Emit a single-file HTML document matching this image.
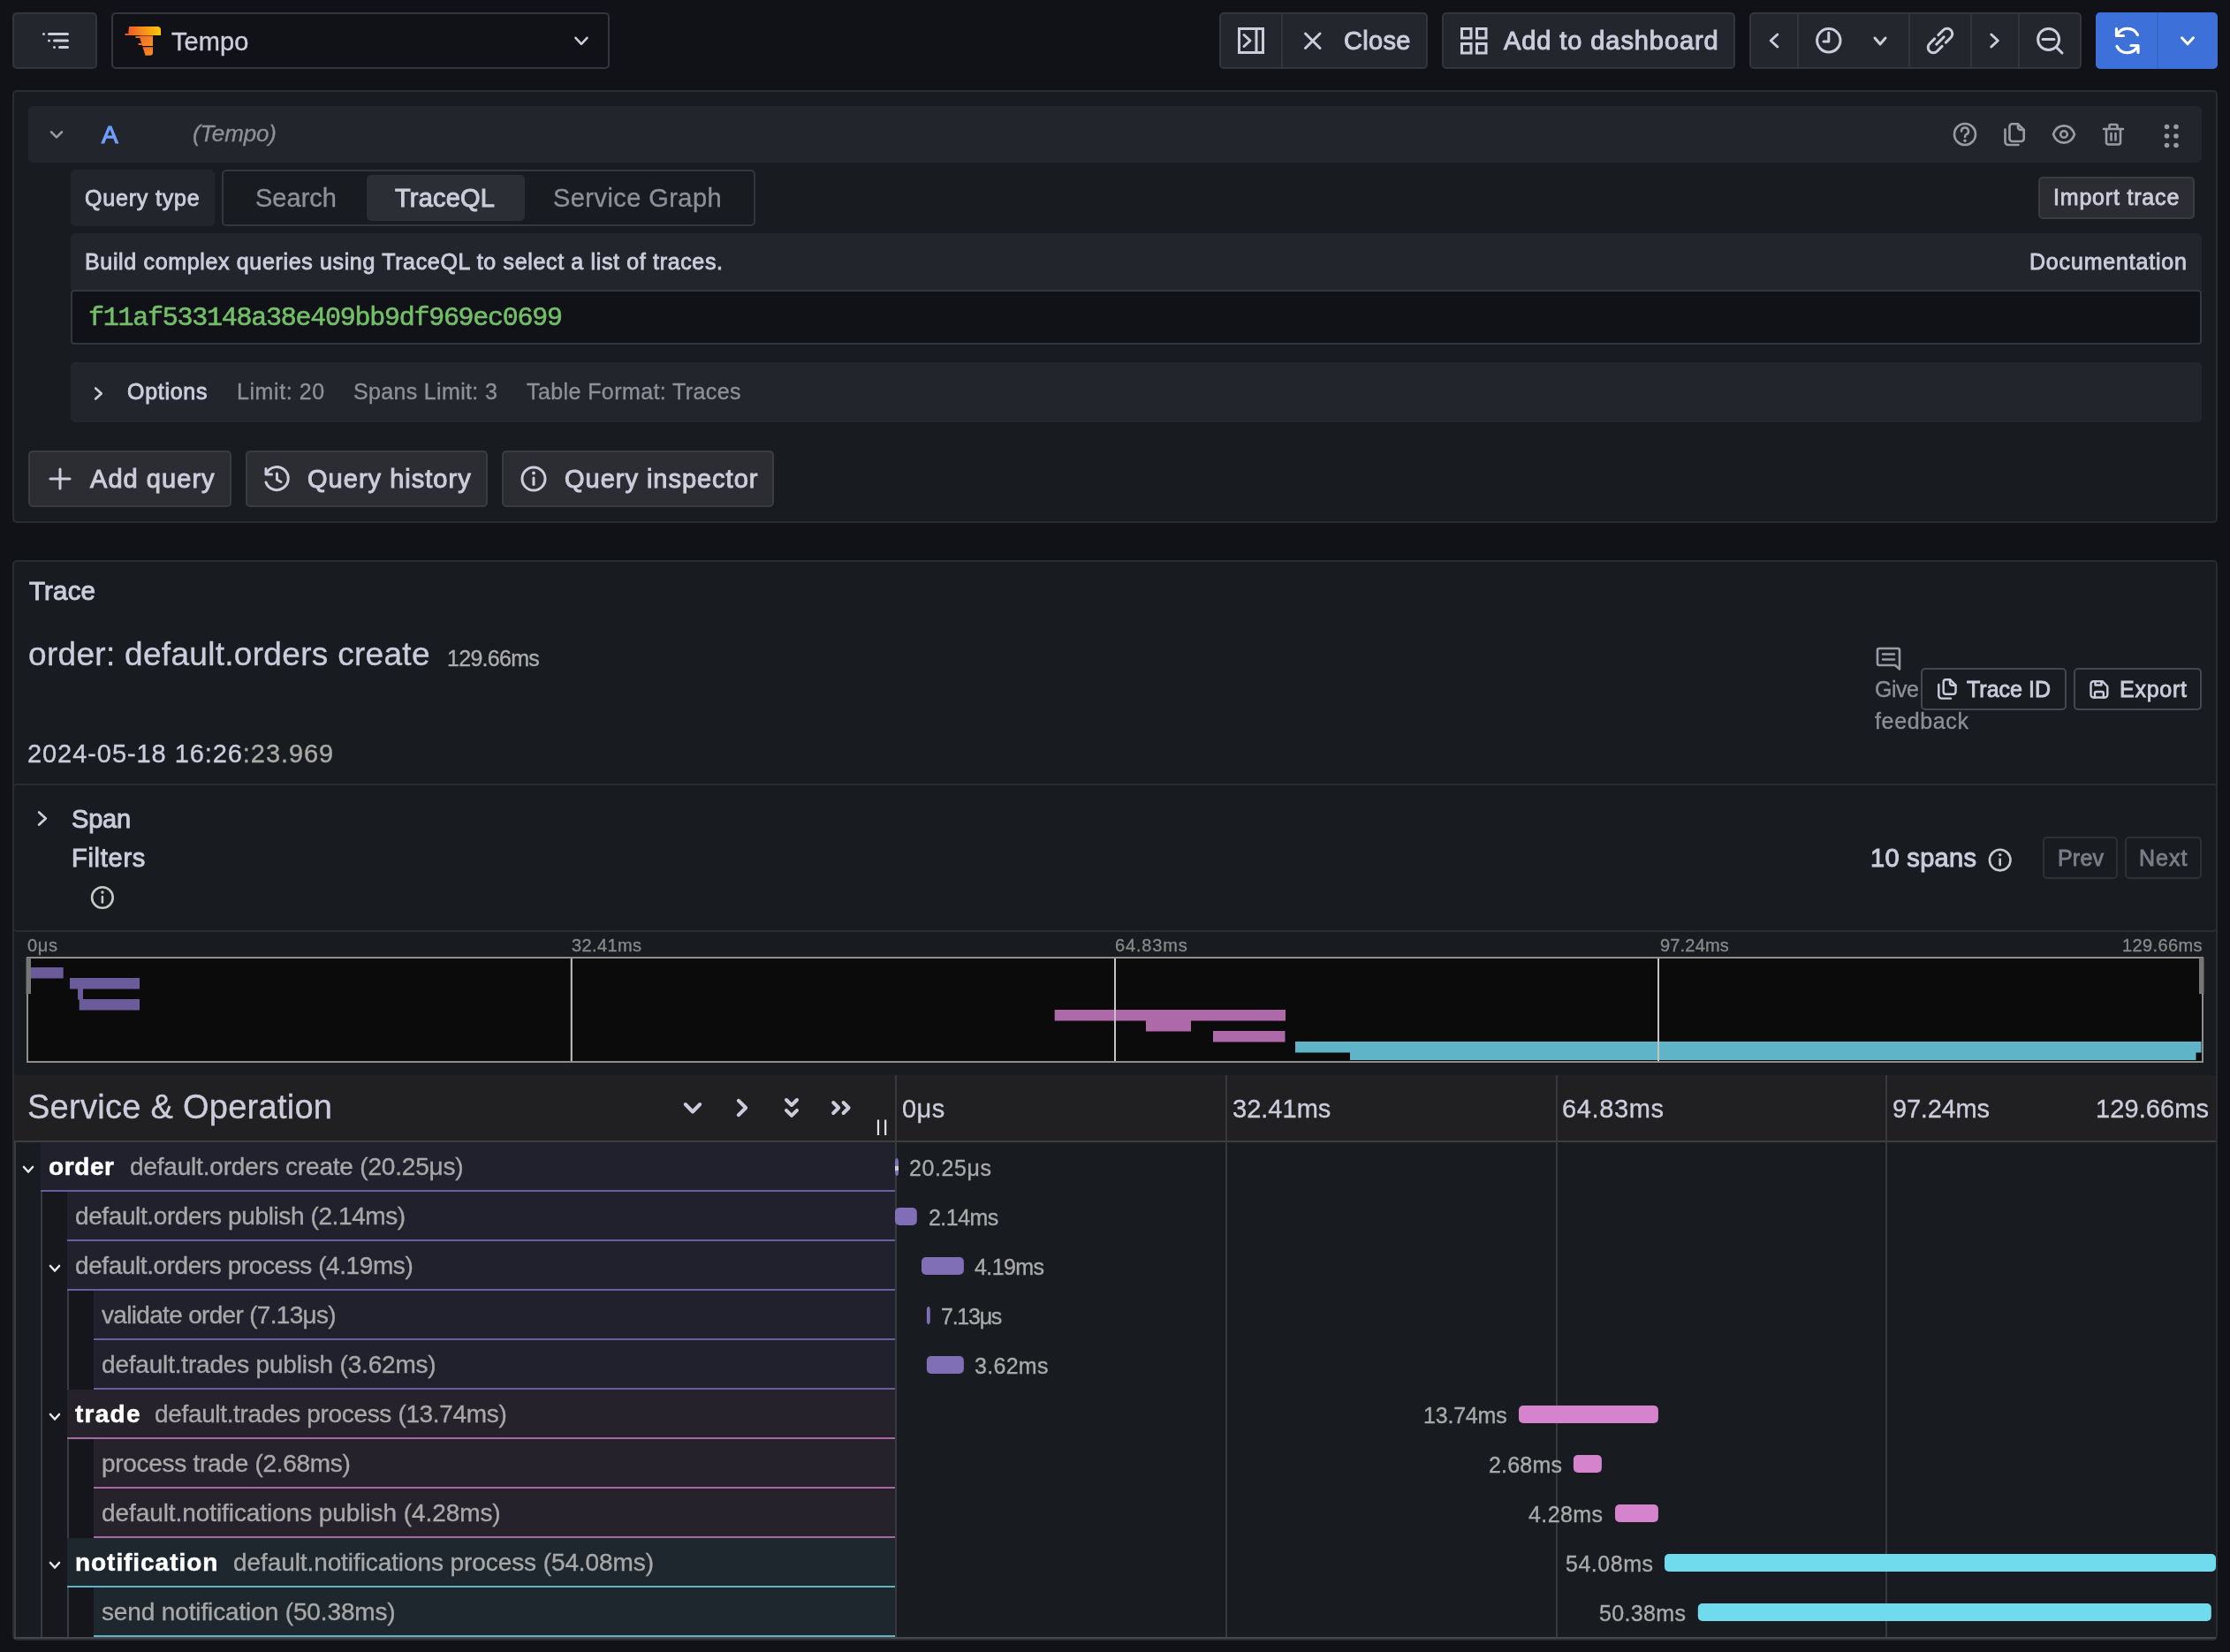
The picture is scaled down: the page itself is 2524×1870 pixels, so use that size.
<!DOCTYPE html>
<html><head><meta charset="utf-8"><title>Explore - Tempo</title><style>
html,body{margin:0;padding:0;}
body{width:2524px;height:1870px;background:#111217;overflow:hidden;position:relative;font-family:"Liberation Sans",sans-serif;}
.b{position:absolute;box-sizing:border-box;}
.t{position:absolute;white-space:pre;will-change:transform;}
svg{overflow:visible;}
</style></head><body>
<div class="b" style="left:14px;top:14px;width:96px;height:64px;background:#23262c;border:2px solid #33353b;border-radius:5px;"></div>
<svg class="b" style="left:0;top:0" width="2524" height="1870" viewBox="0 0 2524 1870"><rect x="48" y="37" width="3" height="3" rx="1.5" fill="#ccccdc"/><rect x="54" y="37" width="24" height="3" rx="1.5" fill="#ccccdc"/><rect x="54" y="44.6" width="3" height="3" rx="1.5" fill="#ccccdc"/><rect x="60" y="44.6" width="18" height="3" rx="1.5" fill="#ccccdc"/><rect x="60" y="52" width="3" height="3" rx="1.5" fill="#ccccdc"/><rect x="66" y="52" width="12" height="3" rx="1.5" fill="#ccccdc"/></svg>
<div class="b" style="left:126px;top:14px;width:564px;height:64px;background:#111217;border:2px solid #34363d;border-radius:5px;"></div>
<svg class="b" style="left:0;top:0" width="2524" height="1870" viewBox="0 0 2524 1870"><defs><linearGradient id="tg" x1="0" y1="0" x2="1" y2="0"><stop offset="0" stop-color="#f05a28"/><stop offset="1" stop-color="#fbca0a"/></linearGradient>
<linearGradient id="tg2" x1="0" y1="0" x2="1" y2="1"><stop offset="0" stop-color="#f2672a"/><stop offset="1" stop-color="#f7941d"/></linearGradient></defs>
<path d="M146 30 H178 Q182 30 182 34 V40 H145 Z" fill="url(#tg)"/>
<rect x="141.5" y="38" width="4" height="2" fill="#f05a28"/>
<path d="M157.5 40.5 H173 V52 H161 Z" fill="url(#tg2)"/>
<rect x="153.5" y="41" width="5" height="2" fill="#f2672a"/>
<rect x="156.5" y="49" width="5" height="2" fill="#f2672a"/>
<path d="M161.5 53.2 H173 V59.5 Q173 62.8 169.5 62.8 H164.5 Z" fill="url(#tg2)"/></svg>
<span class="t" style="top:33.35px;font-family:'Liberation Sans', sans-serif;font-size:29px;line-height:29px;color:#ccccdc;-webkit-text-stroke:0.35px #ccccdc;letter-spacing:0.113px;left:193.5px;">Tempo</span>
<svg class="b" style="left:0;top:0" width="2524" height="1870" viewBox="0 0 2524 1870"><polyline points="651.5,42.8 658.0,49.8 664.5,42.8" fill="none" stroke="#ccccdc" stroke-width="2.6" stroke-linecap="round" stroke-linejoin="round"/></svg>
<div class="b" style="left:1380px;top:14px;width:236px;height:64px;background:#23262c;border:2px solid #33353b;border-radius:5px;"></div>
<div class="b" style="left:1450px;top:16px;width:2px;height:60px;background:#33353b;"></div>
<svg class="b" style="left:0;top:0" width="2524" height="1870" viewBox="0 0 2524 1870"><rect x="1402.5" y="32.5" width="27" height="27" fill="none" stroke="#ccccdc" stroke-width="3"/><line x1="1422" y1="32" x2="1422" y2="60" stroke="#ccccdc" stroke-width="3"/><polyline points="1408.0,39.5 1415.0,46.0 1408.0,52.5" fill="none" stroke="#ccccdc" stroke-width="3" stroke-linecap="round" stroke-linejoin="round"/><path d="M1477.5 38 L1494 54.5 M1494 38 L1477.5 54.5" stroke="#ccccdc" stroke-width="3" stroke-linecap="round"/></svg>
<span class="t" style="top:32.15px;font-family:'Liberation Sans', sans-serif;font-size:29px;line-height:29px;color:#ccccdc;-webkit-text-stroke:1.00px #ccccdc;letter-spacing:0.336px;left:1520.7px;">Close</span>
<div class="b" style="left:1632px;top:14px;width:332px;height:64px;background:#23262c;border:2px solid #33353b;border-radius:5px;"></div>
<svg class="b" style="left:0;top:0" width="2524" height="1870" viewBox="0 0 2524 1870"><rect x="1654.5" y="32.5" width="10.5" height="10.5" fill="none" stroke="#ccccdc" stroke-width="3"/><rect x="1671.5" y="32.5" width="10.5" height="10.5" fill="none" stroke="#ccccdc" stroke-width="3"/><rect x="1654.5" y="49.5" width="10.5" height="10.5" fill="none" stroke="#ccccdc" stroke-width="3"/><rect x="1671.5" y="49.5" width="10.5" height="10.5" fill="none" stroke="#ccccdc" stroke-width="3"/></svg>
<span class="t" style="top:32.15px;font-family:'Liberation Sans', sans-serif;font-size:29px;line-height:29px;color:#ccccdc;-webkit-text-stroke:1.00px #ccccdc;letter-spacing:0.915px;left:1702px;">Add to dashboard</span>
<div class="b" style="left:1980px;top:14px;width:376px;height:64px;background:#23262c;border:2px solid #33353b;border-radius:5px;"></div>
<div class="b" style="left:2034px;top:16px;width:2px;height:60px;background:#33353b;"></div>
<div class="b" style="left:2160px;top:16px;width:2px;height:60px;background:#33353b;"></div>
<div class="b" style="left:2230px;top:16px;width:2px;height:60px;background:#33353b;"></div>
<div class="b" style="left:2284px;top:16px;width:2px;height:60px;background:#33353b;"></div>
<svg class="b" style="left:0;top:0" width="2524" height="1870" viewBox="0 0 2524 1870"><polyline points="2011.8,39.0 2004.2,46.0 2011.8,53.0" fill="none" stroke="#ccccdc" stroke-width="3" stroke-linecap="round" stroke-linejoin="round"/><circle cx="2069.8" cy="45.8" r="13.2" fill="none" stroke="#ccccdc" stroke-width="3"/><path d="M2069.8 37 V47 H2064" fill="none" stroke="#ccccdc" stroke-width="3" stroke-linecap="round" stroke-linejoin="round"/><polyline points="2122.0,43.0 2128.0,50.0 2134.0,43.0" fill="none" stroke="#ccccdc" stroke-width="3" stroke-linecap="round" stroke-linejoin="round"/><g fill="none" stroke="#ccccdc" stroke-width="3" stroke-linecap="round" transform="rotate(-45 2196 46)">
<path d="M2193 40 H2185 a6 6 0 0 0 0 12 H2193"/><path d="M2199 40 H2207 a6 6 0 0 1 0 12 H2199"/><path d="M2190 46 H2202"/></g><polyline points="2253.8,39.0 2261.3,46.0 2253.8,53.0" fill="none" stroke="#ccccdc" stroke-width="3" stroke-linecap="round" stroke-linejoin="round"/><circle cx="2318.6" cy="44.5" r="12" fill="none" stroke="#ccccdc" stroke-width="3"/><path d="M2312 44.5 H2325 M2327.5 53.5 L2334 60" fill="none" stroke="#ccccdc" stroke-width="3" stroke-linecap="round"/></svg>
<div class="b" style="left:2372px;top:14px;width:70px;height:64px;background:#3d71d9;border-radius:5px 0 0 5px;"></div>
<div class="b" style="left:2442px;top:14px;width:68px;height:64px;background:#3d71d9;border-radius:0 5px 5px 0;"></div>
<div class="b" style="left:2441px;top:14px;width:2px;height:64px;background:#3869c9;"></div>
<svg class="b" style="left:0;top:0" width="2524" height="1870" viewBox="0 0 2524 1870"><g fill="none" stroke="#fff" stroke-width="3.2" stroke-linecap="round" stroke-linejoin="round">
<path d="M2396 40 A13 13 0 0 1 2419.5 39.5"/><path d="M2419.5 52 A13 13 0 0 1 2396 52.5"/>
<path d="M2395.5 32.5 V40.5 H2403.5"/><path d="M2420 59.5 V51.5 H2412"/></g><polyline points="2469.5,42.8 2476.0,49.8 2482.5,42.8" fill="none" stroke="#fff" stroke-width="3" stroke-linecap="round" stroke-linejoin="round"/></svg>
<div class="b" style="left:14px;top:102px;width:2496px;height:490px;background:#181b1f;border:2px solid #2a2c32;border-radius:5px;"></div>
<div class="b" style="left:32px;top:120px;width:2460px;height:64px;background:#22252b;border-radius:5px;"></div>
<svg class="b" style="left:0;top:0" width="2524" height="1870" viewBox="0 0 2524 1870"><polyline points="58.0,149.3 64.0,155.3 70.0,149.3" fill="none" stroke="#9a9ba6" stroke-width="2.6" stroke-linecap="round" stroke-linejoin="round"/></svg>
<span class="t" style="top:138.50px;font-family:'Liberation Sans', sans-serif;font-size:28px;line-height:28px;color:#6e9fff;-webkit-text-stroke:1.2px #6e9fff;left:114.8px;">A</span>
<span class="t" style="top:138.20px;font-family:'Liberation Sans', sans-serif;font-size:26px;line-height:26px;color:#8e8f9a;-webkit-text-stroke:0.35px #8e8f9a;font-style:italic;letter-spacing:-0.143px;left:218px;">(Tempo)</span>
<svg class="b" style="left:0;top:0" width="2524" height="1870" viewBox="0 0 2524 1870"><g fill="none" stroke="#9a9ba6" stroke-width="2.6" stroke-linecap="round" stroke-linejoin="round"><circle cx="2224" cy="152" r="12"/><path d="M2220 148.5 a4 4 0 1 1 5.5 3.7 c-1.2 0.6 -1.5 1.3 -1.5 2.8"/></g><circle cx="2224" cy="159.3" r="1.7" fill="#9a9ba6"/><g fill="none" stroke="#9a9ba6" stroke-width="2.6" stroke-linecap="round" stroke-linejoin="round"><path d="M2277.5 140.3 H2284 L2290.7 147 V157 a3 3 0 0 1 -3 3 H2277.5 a3 3 0 0 1 -3 -3 V143.3 a3 3 0 0 1 3 -3 Z"/><path d="M2284 140.3 V144 a3 3 0 0 0 3 3 H2290.7"/><path d="M2269.5 146.5 V160.5 a3.5 3.5 0 0 0 3.5 3.5 H2284.5"/><path d="M2324 152 C2328.5 139.2 2343.5 139.2 2348 152 C2343.5 164.8 2328.5 164.8 2324 152 Z"/><circle cx="2336" cy="152" r="3.8"/><path d="M2381 146 H2403 M2387.5 146 V142.5 a1.5 1.5 0 0 1 1.5 -1.5 H2395 a1.5 1.5 0 0 1 1.5 1.5 V146 M2384 146 V161 a2.5 2.5 0 0 0 2.5 2.5 H2397.5 a2.5 2.5 0 0 0 2.5 -2.5 V146 M2389.5 151 V158.5 M2394.5 151 V158.5"/></g><circle cx="2452.5" cy="143.5" r="2.8" fill="#9a9ba6"/><circle cx="2452.5" cy="154" r="2.8" fill="#9a9ba6"/><circle cx="2452.5" cy="164.5" r="2.8" fill="#9a9ba6"/><circle cx="2463" cy="143.5" r="2.8" fill="#9a9ba6"/><circle cx="2463" cy="154" r="2.8" fill="#9a9ba6"/><circle cx="2463" cy="164.5" r="2.8" fill="#9a9ba6"/></svg>
<div class="b" style="left:80px;top:192px;width:163px;height:64px;background:#22252b;border-radius:5px;"></div>
<span class="t" style="top:212.25px;font-family:'Liberation Sans', sans-serif;font-size:25px;line-height:25px;color:#ccccdc;-webkit-text-stroke:0.86px #ccccdc;letter-spacing:0.813px;left:96px;">Query type</span>
<div class="b" style="left:251px;top:192px;width:604px;height:64px;background:#181b1f;border:2px solid #34363d;border-radius:5px;"></div>
<div class="b" style="left:415px;top:198px;width:179px;height:52px;background:#2c2e35;border-radius:5px;"></div>
<span class="t" style="top:210.35px;font-family:'Liberation Sans', sans-serif;font-size:29px;line-height:29px;color:#8e8f9a;-webkit-text-stroke:0.35px #8e8f9a;letter-spacing:0.022px;left:289px;">Search</span>
<span class="t" style="top:210.35px;font-family:'Liberation Sans', sans-serif;font-size:29px;line-height:29px;color:#ccccdc;-webkit-text-stroke:1.00px #ccccdc;letter-spacing:0.208px;left:447px;">TraceQL</span>
<span class="t" style="top:210.35px;font-family:'Liberation Sans', sans-serif;font-size:29px;line-height:29px;color:#8e8f9a;-webkit-text-stroke:0.35px #8e8f9a;letter-spacing:0.437px;left:626px;">Service Graph</span>
<div class="b" style="left:2307px;top:200px;width:177px;height:48px;background:#2b2d33;border:2px solid #3a3c42;border-radius:5px;"></div>
<span class="t" style="top:211.05px;font-family:'Liberation Sans', sans-serif;font-size:25px;line-height:25px;color:#ccccdc;-webkit-text-stroke:0.86px #ccccdc;letter-spacing:0.811px;left:2323.7px;">Import trace</span>
<div class="b" style="left:80px;top:264px;width:2412px;height:64px;background:#22252b;border-radius:5px 5px 0 0;"></div>
<span class="t" style="top:284.25px;font-family:'Liberation Sans', sans-serif;font-size:25px;line-height:25px;color:#ccccdc;-webkit-text-stroke:0.86px #ccccdc;letter-spacing:0.656px;left:96px;">Build complex queries using TraceQL to select a list of traces.</span>
<span class="t" style="top:283.75px;font-family:'Liberation Sans', sans-serif;font-size:25px;line-height:25px;color:#ccccdc;-webkit-text-stroke:0.86px #ccccdc;letter-spacing:0.82px;left:2297px;">Documentation</span>
<div class="b" style="left:80px;top:328px;width:2412px;height:62px;background:#111217;border:2px solid #34363d;border-radius:4px;"></div>
<span class="t" style="top:345.25px;font-family:'Liberation Mono', monospace;font-size:30px;line-height:30px;color:#73bf69;-webkit-text-stroke:0.6px #73bf69;letter-spacing:-1.258px;left:99.7px;">f11af533148a38e409bb9df969ec0699</span>
<div class="b" style="left:80px;top:410px;width:2412px;height:68px;background:#22252b;border-radius:5px;"></div>
<svg class="b" style="left:0;top:0" width="2524" height="1870" viewBox="0 0 2524 1870"><polyline points="108.2,439.5 114.8,445.5 108.2,451.5" fill="none" stroke="#ccccdc" stroke-width="2.6" stroke-linecap="round" stroke-linejoin="round"/></svg>
<span class="t" style="top:431.25px;font-family:'Liberation Sans', sans-serif;font-size:25px;line-height:25px;color:#ccccdc;-webkit-text-stroke:0.86px #ccccdc;letter-spacing:0.721px;left:144px;">Options</span>
<span class="t" style="top:431.25px;font-family:'Liberation Sans', sans-serif;font-size:25px;line-height:25px;color:#8e8f9a;-webkit-text-stroke:0.35px #8e8f9a;letter-spacing:0.577px;left:267.7px;">Limit: 20</span>
<span class="t" style="top:431.25px;font-family:'Liberation Sans', sans-serif;font-size:25px;line-height:25px;color:#8e8f9a;-webkit-text-stroke:0.35px #8e8f9a;letter-spacing:0.337px;left:400px;">Spans Limit: 3</span>
<span class="t" style="top:431.25px;font-family:'Liberation Sans', sans-serif;font-size:25px;line-height:25px;color:#8e8f9a;-webkit-text-stroke:0.35px #8e8f9a;letter-spacing:0.41px;left:596px;">Table Format: Traces</span>
<div class="b" style="left:32px;top:510px;width:230px;height:64px;background:#2b2d33;border:2px solid #3a3c42;border-radius:5px;"></div>
<div class="b" style="left:278px;top:510px;width:274px;height:64px;background:#2b2d33;border:2px solid #3a3c42;border-radius:5px;"></div>
<div class="b" style="left:568px;top:510px;width:308px;height:64px;background:#2b2d33;border:2px solid #3a3c42;border-radius:5px;"></div>
<svg class="b" style="left:0;top:0" width="2524" height="1870" viewBox="0 0 2524 1870"><g fill="none" stroke="#ccccdc" stroke-width="3" stroke-linecap="round" stroke-linejoin="round"><path d="M57 542 H79 M68 531 V553"/><path d="M301.5 536 A13 13 0 1 1 301 546"/><path d="M301 530.5 V537 H307.5"/><path d="M313.5 536 V543 L318 545.5"/><circle cx="604" cy="542" r="13"/><path d="M604 541 V548.5"/></g><circle cx="604" cy="535.5" r="1.9" fill="#ccccdc"/></svg>
<span class="t" style="top:527.95px;font-family:'Liberation Sans', sans-serif;font-size:29px;line-height:29px;color:#ccccdc;-webkit-text-stroke:1.00px #ccccdc;letter-spacing:1.05px;left:102px;">Add query</span>
<span class="t" style="top:527.95px;font-family:'Liberation Sans', sans-serif;font-size:29px;line-height:29px;color:#ccccdc;-webkit-text-stroke:1.00px #ccccdc;letter-spacing:1.021px;left:348px;">Query history</span>
<span class="t" style="top:527.95px;font-family:'Liberation Sans', sans-serif;font-size:29px;line-height:29px;color:#ccccdc;-webkit-text-stroke:1.00px #ccccdc;letter-spacing:0.978px;left:638.6px;">Query inspector</span>
<div class="b" style="left:14px;top:634px;width:2496px;height:1223px;background:#181b1f;border:2px solid #2a2c32;border-radius:5px;"></div>
<span class="t" style="top:653.92px;font-family:'Liberation Sans', sans-serif;font-size:29.5px;line-height:29.5px;color:#ccccdc;-webkit-text-stroke:1.02px #ccccdc;letter-spacing:0.172px;left:32.8px;">Trace</span>
<span class="t" style="top:722.15px;font-family:'Liberation Sans', sans-serif;font-size:37px;line-height:37px;color:#ccccdc;-webkit-text-stroke:0.35px #ccccdc;letter-spacing:0.304px;left:32px;">order: default.orders create</span>
<span class="t" style="top:732.55px;font-family:'Liberation Sans', sans-serif;font-size:25px;line-height:25px;color:#adadad;-webkit-text-stroke:0.35px #adadad;letter-spacing:-0.714px;left:506px;">129.66ms</span>
<span class="t" style="top:839.35px;font-family:'Liberation Sans', sans-serif;font-size:29px;line-height:29px;color:#ccccdc;-webkit-text-stroke:0.35px #ccccdc;letter-spacing:0.93px;left:30.5px;">2024-05-18 16:26<span style="color:#a9a9a4;-webkit-text-stroke-color:#a9a9a4">:23.969</span></span>
<svg class="b" style="left:0;top:0" width="2524" height="1870" viewBox="0 0 2524 1870"><g fill="none" stroke="#9a9ba6" stroke-width="2.6" stroke-linecap="round" stroke-linejoin="round"><path d="M2127 734 H2148 a2 2 0 0 1 2 2 V757.5 L2145 753 H2127 a2 2 0 0 1 -2 -2 V736 a2 2 0 0 1 2 -2 Z"/><path d="M2131 740.5 H2144 M2131 746.5 H2144"/></g></svg>
<span class="t" style="top:767.75px;font-family:'Liberation Sans', sans-serif;font-size:25px;line-height:25px;color:#8e8f9a;-webkit-text-stroke:0.35px #8e8f9a;letter-spacing:-0.469px;left:2122px;">Give</span>
<span class="t" style="top:804.25px;font-family:'Liberation Sans', sans-serif;font-size:25px;line-height:25px;color:#8e8f9a;-webkit-text-stroke:0.35px #8e8f9a;letter-spacing:0.647px;left:2122px;">feedback</span>
<div class="b" style="left:2174px;top:756px;width:165px;height:48px;background:#181b1f;border:2px solid #45474e;border-radius:5px;"></div>
<div class="b" style="left:2347px;top:756px;width:145px;height:48px;background:#181b1f;border:2px solid #45474e;border-radius:5px;"></div>
<svg class="b" style="left:0;top:0" width="2524" height="1870" viewBox="0 0 2524 1870"><g fill="none" stroke="#ccccdc" stroke-width="2.4" stroke-linecap="round" stroke-linejoin="round"><path d="M2202.5 769.2 H2207 L2213.5 775.7 V783 a2.8 2.8 0 0 1 -2.8 2.8 H2202.5 a2.8 2.8 0 0 1 -2.8 -2.8 V772 a2.8 2.8 0 0 1 2.8 -2.8 Z"/><path d="M2207 769.2 V773 a2.7 2.7 0 0 0 2.7 2.7 H2213.5"/><path d="M2194.3 775 V787.3 a3.3 3.3 0 0 0 3.3 3.3 H2208"/><path d="M2369.5 771.2 H2379.5 L2385.3 777 V786.5 a3 3 0 0 1 -3 3 H2369.5 a3 3 0 0 1 -3 -3 V774.2 a3 3 0 0 1 3 -3 Z"/><path d="M2371.5 771.2 V775.5 H2378.5 V771.2"/><path d="M2371 789.5 V784.5 a1.5 1.5 0 0 1 1.5 -1.5 H2379.3 a1.5 1.5 0 0 1 1.5 1.5 V789.5"/></g></svg>
<span class="t" style="top:767.55px;font-family:'Liberation Sans', sans-serif;font-size:25px;line-height:25px;color:#ccccdc;-webkit-text-stroke:0.86px #ccccdc;letter-spacing:0.011px;left:2226px;">Trace ID</span>
<span class="t" style="top:767.55px;font-family:'Liberation Sans', sans-serif;font-size:25px;line-height:25px;color:#ccccdc;-webkit-text-stroke:0.86px #ccccdc;letter-spacing:0.747px;left:2399px;">Export</span>
<div class="b" style="left:14px;top:887px;width:2496px;height:168px;background:#181b1f;border:2px solid #2a2c32;border-radius:5px;"></div>
<svg class="b" style="left:0;top:0" width="2524" height="1870" viewBox="0 0 2524 1870"><polyline points="44.2,919.5 51.8,926.5 44.2,933.5" fill="none" stroke="#ccccdc" stroke-width="2.8" stroke-linecap="round" stroke-linejoin="round"/></svg>
<span class="t" style="top:912.75px;font-family:'Liberation Sans', sans-serif;font-size:29px;line-height:29px;color:#ccccdc;-webkit-text-stroke:1.00px #ccccdc;letter-spacing:-0.211px;left:80.7px;">Span</span>
<span class="t" style="top:957.35px;font-family:'Liberation Sans', sans-serif;font-size:29px;line-height:29px;color:#ccccdc;-webkit-text-stroke:1.00px #ccccdc;letter-spacing:0.724px;left:80.7px;">Filters</span>
<svg class="b" style="left:0;top:0" width="2524" height="1870" viewBox="0 0 2524 1870"><g fill="none" stroke="#c8c8c8" stroke-width="2.6" stroke-linecap="round"><circle cx="115.9" cy="1016" r="11.8"/><path d="M115.9 1015 V1021.5"/><circle cx="2263.7" cy="973.6" r="11.8"/><path d="M2263.7 972.6 V979.1"/></g><circle cx="115.9" cy="1010" r="1.7" fill="#c8c8c8"/><circle cx="2263.7" cy="967.6" r="1.7" fill="#c8c8c8"/></svg>
<span class="t" style="top:957.35px;font-family:'Liberation Sans', sans-serif;font-size:29px;line-height:29px;color:#ccccdc;-webkit-text-stroke:1.00px #ccccdc;letter-spacing:0.328px;left:2117px;">10 spans</span>
<div class="b" style="left:2312px;top:947px;width:85px;height:48px;background:#181b1f;border:2px solid #2e3036;border-radius:5px;"></div>
<div class="b" style="left:2405px;top:947px;width:87px;height:48px;background:#181b1f;border:2px solid #2e3036;border-radius:5px;"></div>
<span class="t" style="top:959.25px;font-family:'Liberation Sans', sans-serif;font-size:25px;line-height:25px;color:#7b7c87;-webkit-text-stroke:0.86px #7b7c87;letter-spacing:0.198px;left:2328.5px;">Prev</span>
<span class="t" style="top:959.25px;font-family:'Liberation Sans', sans-serif;font-size:25px;line-height:25px;color:#7b7c87;-webkit-text-stroke:0.86px #7b7c87;letter-spacing:1.031px;left:2421px;">Next</span>
<span class="t" style="top:1060.00px;font-family:'Liberation Sans', sans-serif;font-size:20px;line-height:20px;color:#888888;-webkit-text-stroke:0.35px #888888;letter-spacing:0.722px;left:30.5px;">0μs</span>
<span class="t" style="top:1060.00px;font-family:'Liberation Sans', sans-serif;font-size:20px;line-height:20px;color:#888888;-webkit-text-stroke:0.35px #888888;letter-spacing:0.38px;left:647px;">32.41ms</span>
<span class="t" style="top:1060.00px;font-family:'Liberation Sans', sans-serif;font-size:20px;line-height:20px;color:#888888;-webkit-text-stroke:0.35px #888888;letter-spacing:0.83px;left:1262.3px;">64.83ms</span>
<span class="t" style="top:1060.00px;font-family:'Liberation Sans', sans-serif;font-size:20px;line-height:20px;color:#888888;-webkit-text-stroke:0.35px #888888;letter-spacing:0.18px;left:1878.5px;">97.24ms</span>
<span class="t" style="top:1060.00px;font-family:'Liberation Sans', sans-serif;font-size:20px;line-height:20px;color:#888888;-webkit-text-stroke:0.35px #888888;letter-spacing:0.394px;right:31.01px;">129.66ms</span>
<div class="b" style="left:30px;top:1083px;width:2464px;height:120px;background:#0b0b0c;border:2px solid #8e8e8e;"></div>
<svg class="b" style="left:0;top:0" width="2524" height="1870" viewBox="0 0 2524 1870"><rect x="34.8" y="1095" width="36.9" height="12.5" fill="#6b5b9a"/><rect x="79" y="1107" width="79.0" height="12.5" fill="#6b5b9a"/><rect x="88" y="1119" width="6.0" height="12.5" fill="#6b5b9a"/><rect x="89.7" y="1131" width="68.3" height="12.5" fill="#6b5b9a"/><rect x="1193.7" y="1143" width="261.3" height="12.5" fill="#ae69a8"/><rect x="1297" y="1155" width="51.0" height="12.5" fill="#ae69a8"/><rect x="1373" y="1167" width="81.5" height="12.5" fill="#ae69a8"/><rect x="1466" y="1179" width="1025.5" height="12.5" fill="#5fb4c7"/><rect x="1528" y="1190" width="957.5" height="10" fill="#5fb4c7"/><rect x="645.8" y="1085" width="2" height="116" fill="#c4c4c4"/><rect x="1261" y="1085" width="2" height="116" fill="#c4c4c4"/><rect x="1876" y="1085" width="2" height="116" fill="#c4c4c4"/><rect x="29.5" y="1084" width="5.5" height="41" fill="#767676"/><rect x="2489" y="1084" width="5.5" height="41" fill="#767676"/></svg>
<div class="b" style="left:16px;top:1217px;width:2492px;height:74px;background:#202022;"></div>
<div class="b" style="left:16px;top:1291px;width:2492px;height:2px;background:#3e3e40;"></div>
<div class="b" style="left:16px;top:1293px;width:2px;height:562px;background:#3c3c3e;"></div>
<div class="b" style="left:16px;top:1853px;width:2492px;height:2px;background:#46474a;"></div>
<span class="t" style="top:1234.20px;font-family:'Liberation Sans', sans-serif;font-size:38px;line-height:38px;color:#ccccdc;-webkit-text-stroke:0.35px #ccccdc;letter-spacing:0.274px;left:31px;">Service &amp; Operation</span>
<svg class="b" style="left:0;top:0" width="2524" height="1870" viewBox="0 0 2524 1870"><polyline points="775.8,1250.0 784.0,1258.5 792.2,1250.0" fill="none" stroke="#ccccdc" stroke-width="4" stroke-linecap="round" stroke-linejoin="round"/><polyline points="835.8,1245.8 844.2,1254.0 835.8,1262.2" fill="none" stroke="#ccccdc" stroke-width="4" stroke-linecap="round" stroke-linejoin="round"/><polyline points="890.0,1245.0 896.0,1251.0 902.0,1245.0" fill="none" stroke="#ccccdc" stroke-width="4" stroke-linecap="round" stroke-linejoin="round"/><polyline points="890.0,1256.8 896.0,1262.8 902.0,1256.8" fill="none" stroke="#ccccdc" stroke-width="4" stroke-linecap="round" stroke-linejoin="round"/><polyline points="943.2,1248.0 949.2,1254.0 943.2,1260.0" fill="none" stroke="#ccccdc" stroke-width="4" stroke-linecap="round" stroke-linejoin="round"/><polyline points="954.6,1248.0 960.6,1254.0 954.6,1260.0" fill="none" stroke="#ccccdc" stroke-width="4" stroke-linecap="round" stroke-linejoin="round"/><path d="M994 1267.5 V1285 M1002.2 1267.5 V1285" stroke="#e4e4e4" stroke-width="2.2"/></svg>
<div class="b" style="left:1013px;top:1217px;width:2px;height:636px;background:#38393d;"></div>
<div class="b" style="left:1387px;top:1217px;width:2px;height:636px;background:#38393d;"></div>
<div class="b" style="left:1761px;top:1217px;width:2px;height:636px;background:#38393d;"></div>
<div class="b" style="left:2134px;top:1217px;width:2px;height:636px;background:#38393d;"></div>
<span class="t" style="top:1240.85px;font-family:'Liberation Sans', sans-serif;font-size:29px;line-height:29px;color:#ccccdc;-webkit-text-stroke:0.35px #ccccdc;letter-spacing:0.428px;left:1020.5px;">0μs</span>
<span class="t" style="top:1240.85px;font-family:'Liberation Sans', sans-serif;font-size:29px;line-height:29px;color:#ccccdc;-webkit-text-stroke:0.35px #ccccdc;letter-spacing:0.011px;left:1395px;">32.41ms</span>
<span class="t" style="top:1240.85px;font-family:'Liberation Sans', sans-serif;font-size:29px;line-height:29px;color:#ccccdc;-webkit-text-stroke:0.35px #ccccdc;letter-spacing:0.628px;left:1768px;">64.83ms</span>
<span class="t" style="top:1240.85px;font-family:'Liberation Sans', sans-serif;font-size:29px;line-height:29px;color:#ccccdc;-webkit-text-stroke:0.35px #ccccdc;letter-spacing:-0.206px;left:2142px;">97.24ms</span>
<span class="t" style="top:1240.85px;font-family:'Liberation Sans', sans-serif;font-size:29px;line-height:29px;color:#ccccdc;-webkit-text-stroke:0.35px #ccccdc;letter-spacing:0.106px;right:24.29px;">129.66ms</span>
<div class="b" style="left:18px;top:1293px;width:28px;height:56px;background:#181b20;"></div>
<div class="b" style="left:46px;top:1293px;width:967px;height:56px;background:#20212c;"></div>
<div class="b" style="left:46px;top:1347px;width:967px;height:2px;background:#6a5ca0;"></div>
<span class="t" style="top:1307.00px;font-family:'Liberation Sans', sans-serif;font-size:28px;line-height:28px;color:#ffffff;font-weight:700;-webkit-text-stroke:0.5px #ffffff;letter-spacing:0.605px;left:55px;">order</span>
<span class="t" style="top:1310.35px;font-family:'Liberation Sans', sans-serif;font-size:25px;line-height:25px;color:#aaaaaa;-webkit-text-stroke:0.35px #aaaaaa;letter-spacing:0.589px;left:1029px;">20.25μs</span>
<div class="b" style="left:18px;top:1349px;width:28px;height:56px;background:#181b20;"></div>
<div class="b" style="left:46px;top:1349px;width:30px;height:56px;background:#16181d;"></div>
<div class="b" style="left:46px;top:1349px;width:2px;height:56px;background:#3a3b42;"></div>
<div class="b" style="left:76px;top:1349px;width:937px;height:56px;background:#20212c;"></div>
<div class="b" style="left:76px;top:1403px;width:937px;height:2px;background:#6a5ca0;"></div>
<span class="t" style="top:1366.35px;font-family:'Liberation Sans', sans-serif;font-size:25px;line-height:25px;color:#aaaaaa;-webkit-text-stroke:0.35px #aaaaaa;letter-spacing:-0.537px;left:1050.7px;">2.14ms</span>
<div class="b" style="left:18px;top:1405px;width:28px;height:56px;background:#181b20;"></div>
<div class="b" style="left:46px;top:1405px;width:30px;height:56px;background:#16181d;"></div>
<div class="b" style="left:46px;top:1405px;width:2px;height:56px;background:#3a3b42;"></div>
<div class="b" style="left:76px;top:1405px;width:937px;height:56px;background:#20212c;"></div>
<div class="b" style="left:76px;top:1459px;width:937px;height:2px;background:#6a5ca0;"></div>
<span class="t" style="top:1422.35px;font-family:'Liberation Sans', sans-serif;font-size:25px;line-height:25px;color:#aaaaaa;-webkit-text-stroke:0.35px #aaaaaa;letter-spacing:-0.597px;left:1103px;">4.19ms</span>
<div class="b" style="left:18px;top:1461px;width:28px;height:56px;background:#181b20;"></div>
<div class="b" style="left:46px;top:1461px;width:30px;height:56px;background:#16181d;"></div>
<div class="b" style="left:76px;top:1461px;width:30px;height:56px;background:#14161b;"></div>
<div class="b" style="left:46px;top:1461px;width:2px;height:56px;background:#3a3b42;"></div>
<div class="b" style="left:76px;top:1461px;width:2px;height:56px;background:#3a3b42;"></div>
<div class="b" style="left:106px;top:1461px;width:907px;height:56px;background:#20212c;"></div>
<div class="b" style="left:106px;top:1515px;width:907px;height:2px;background:#6a5ca0;"></div>
<span class="t" style="top:1478.35px;font-family:'Liberation Sans', sans-serif;font-size:25px;line-height:25px;color:#aaaaaa;-webkit-text-stroke:0.35px #aaaaaa;letter-spacing:-1.253px;left:1064.7px;">7.13μs</span>
<div class="b" style="left:18px;top:1517px;width:28px;height:56px;background:#181b20;"></div>
<div class="b" style="left:46px;top:1517px;width:30px;height:56px;background:#16181d;"></div>
<div class="b" style="left:76px;top:1517px;width:30px;height:56px;background:#14161b;"></div>
<div class="b" style="left:46px;top:1517px;width:2px;height:56px;background:#3a3b42;"></div>
<div class="b" style="left:76px;top:1517px;width:2px;height:56px;background:#3a3b42;"></div>
<div class="b" style="left:106px;top:1517px;width:907px;height:56px;background:#20212c;"></div>
<div class="b" style="left:106px;top:1571px;width:907px;height:2px;background:#6a5ca0;"></div>
<span class="t" style="top:1534.35px;font-family:'Liberation Sans', sans-serif;font-size:25px;line-height:25px;color:#aaaaaa;-webkit-text-stroke:0.35px #aaaaaa;letter-spacing:0.303px;left:1103px;">3.62ms</span>
<div class="b" style="left:18px;top:1573px;width:28px;height:56px;background:#181b20;"></div>
<div class="b" style="left:46px;top:1573px;width:30px;height:56px;background:#16181d;"></div>
<div class="b" style="left:46px;top:1573px;width:2px;height:56px;background:#3a3b42;"></div>
<div class="b" style="left:76px;top:1573px;width:937px;height:56px;background:#25222c;"></div>
<div class="b" style="left:76px;top:1627px;width:937px;height:2px;background:#a768a4;"></div>
<span class="t" style="top:1587.00px;font-family:'Liberation Sans', sans-serif;font-size:28px;line-height:28px;color:#ffffff;font-weight:700;-webkit-text-stroke:0.5px #ffffff;letter-spacing:1.258px;left:85px;">trade</span>
<span class="t" style="top:1590.35px;font-family:'Liberation Sans', sans-serif;font-size:25px;line-height:25px;color:#aaaaaa;-webkit-text-stroke:0.35px #aaaaaa;letter-spacing:-0.198px;left:1611px;">13.74ms</span>
<div class="b" style="left:18px;top:1629px;width:28px;height:56px;background:#181b20;"></div>
<div class="b" style="left:46px;top:1629px;width:30px;height:56px;background:#16181d;"></div>
<div class="b" style="left:76px;top:1629px;width:30px;height:56px;background:#14161b;"></div>
<div class="b" style="left:46px;top:1629px;width:2px;height:56px;background:#3a3b42;"></div>
<div class="b" style="left:76px;top:1629px;width:2px;height:56px;background:#3a3b42;"></div>
<div class="b" style="left:106px;top:1629px;width:907px;height:56px;background:#25222c;"></div>
<div class="b" style="left:106px;top:1683px;width:907px;height:2px;background:#a768a4;"></div>
<span class="t" style="top:1646.35px;font-family:'Liberation Sans', sans-serif;font-size:25px;line-height:25px;color:#aaaaaa;-webkit-text-stroke:0.35px #aaaaaa;letter-spacing:0.203px;left:1684.5px;">2.68ms</span>
<div class="b" style="left:18px;top:1685px;width:28px;height:56px;background:#181b20;"></div>
<div class="b" style="left:46px;top:1685px;width:30px;height:56px;background:#16181d;"></div>
<div class="b" style="left:76px;top:1685px;width:30px;height:56px;background:#14161b;"></div>
<div class="b" style="left:46px;top:1685px;width:2px;height:56px;background:#3a3b42;"></div>
<div class="b" style="left:76px;top:1685px;width:2px;height:56px;background:#3a3b42;"></div>
<div class="b" style="left:106px;top:1685px;width:907px;height:56px;background:#25222c;"></div>
<div class="b" style="left:106px;top:1739px;width:907px;height:2px;background:#a768a4;"></div>
<span class="t" style="top:1702.35px;font-family:'Liberation Sans', sans-serif;font-size:25px;line-height:25px;color:#aaaaaa;-webkit-text-stroke:0.35px #aaaaaa;letter-spacing:0.403px;left:1730px;">4.28ms</span>
<div class="b" style="left:18px;top:1741px;width:28px;height:56px;background:#181b20;"></div>
<div class="b" style="left:46px;top:1741px;width:30px;height:56px;background:#16181d;"></div>
<div class="b" style="left:46px;top:1741px;width:2px;height:56px;background:#3a3b42;"></div>
<div class="b" style="left:76px;top:1741px;width:937px;height:56px;background:#1f272e;"></div>
<div class="b" style="left:76px;top:1795px;width:937px;height:2px;background:#5cb4c6;"></div>
<span class="t" style="top:1755.00px;font-family:'Liberation Sans', sans-serif;font-size:28px;line-height:28px;color:#ffffff;font-weight:700;-webkit-text-stroke:0.5px #ffffff;letter-spacing:0.948px;left:85px;">notification</span>
<span class="t" style="top:1758.35px;font-family:'Liberation Sans', sans-serif;font-size:25px;line-height:25px;color:#aaaaaa;-webkit-text-stroke:0.35px #aaaaaa;letter-spacing:0.518px;left:1772px;">54.08ms</span>
<div class="b" style="left:18px;top:1797px;width:28px;height:56px;background:#181b20;"></div>
<div class="b" style="left:46px;top:1797px;width:30px;height:56px;background:#16181d;"></div>
<div class="b" style="left:76px;top:1797px;width:30px;height:56px;background:#14161b;"></div>
<div class="b" style="left:46px;top:1797px;width:2px;height:56px;background:#3a3b42;"></div>
<div class="b" style="left:76px;top:1797px;width:2px;height:56px;background:#3a3b42;"></div>
<div class="b" style="left:106px;top:1797px;width:907px;height:56px;background:#1f272e;"></div>
<div class="b" style="left:106px;top:1851px;width:907px;height:2px;background:#5cb4c6;"></div>
<span class="t" style="top:1814.35px;font-family:'Liberation Sans', sans-serif;font-size:25px;line-height:25px;color:#aaaaaa;-webkit-text-stroke:0.35px #aaaaaa;letter-spacing:0.352px;left:1810px;">50.38ms</span>
<svg class="b" style="left:0;top:0" width="2524" height="1870" viewBox="0 0 2524 1870"><polyline points="27.0,1321.0 32.0,1326.5 37.0,1321.0" fill="none" stroke="#e8e8e8" stroke-width="2.6" stroke-linecap="round" stroke-linejoin="round"/><rect x="1013" y="1311" width="4.0" height="20" rx="5" fill="#806eb7"/><rect x="1013" y="1367" width="24.8" height="20" rx="5" fill="#806eb7"/><polyline points="57.0,1433.0 62.0,1438.5 67.0,1433.0" fill="none" stroke="#e8e8e8" stroke-width="2.6" stroke-linecap="round" stroke-linejoin="round"/><rect x="1043" y="1423" width="47.9" height="20" rx="5" fill="#806eb7"/><rect x="1048.9" y="1479" width="3.9" height="20" rx="5" fill="#806eb7"/><rect x="1048.9" y="1535" width="42.0" height="20" rx="5" fill="#806eb7"/><polyline points="57.0,1601.0 62.0,1606.5 67.0,1601.0" fill="none" stroke="#e8e8e8" stroke-width="2.6" stroke-linecap="round" stroke-linejoin="round"/><rect x="1719" y="1591" width="157.9" height="20" rx="5" fill="#d683ce"/><rect x="1780.9" y="1647" width="32.0" height="20" rx="5" fill="#d683ce"/><rect x="1828" y="1703" width="48.9" height="20" rx="5" fill="#d683ce"/><polyline points="57.0,1769.0 62.0,1774.5 67.0,1769.0" fill="none" stroke="#e8e8e8" stroke-width="2.6" stroke-linecap="round" stroke-linejoin="round"/><rect x="1884" y="1759" width="624.0" height="20" rx="5" fill="#70dbed"/><rect x="1921.8" y="1815" width="581.0" height="20" rx="5" fill="#70dbed"/></svg>
<div class="b" style="left:1013px;top:1319.5px;width:4px;height:5.5px;background:#c8d0d0;"></div>
<span class="t" style="top:1307.00px;font-family:'Liberation Sans', sans-serif;font-size:28px;line-height:28px;color:#a8a8a8;-webkit-text-stroke:0.35px #a8a8a8;letter-spacing:-0.195px;left:146.9px;">default.orders create (20.25μs)</span>
<span class="t" style="top:1363.00px;font-family:'Liberation Sans', sans-serif;font-size:28px;line-height:28px;color:#a8a8a8;-webkit-text-stroke:0.35px #a8a8a8;letter-spacing:-0.393px;left:84.8px;">default.orders publish (2.14ms)</span>
<span class="t" style="top:1419.00px;font-family:'Liberation Sans', sans-serif;font-size:28px;line-height:28px;color:#a8a8a8;-webkit-text-stroke:0.35px #a8a8a8;letter-spacing:-0.419px;left:84.8px;">default.orders process (4.19ms)</span>
<span class="t" style="top:1475.00px;font-family:'Liberation Sans', sans-serif;font-size:28px;line-height:28px;color:#a8a8a8;-webkit-text-stroke:0.35px #a8a8a8;letter-spacing:-0.683px;left:114.8px;">validate order (7.13μs)</span>
<span class="t" style="top:1531.00px;font-family:'Liberation Sans', sans-serif;font-size:28px;line-height:28px;color:#a8a8a8;-webkit-text-stroke:0.35px #a8a8a8;letter-spacing:-0.191px;left:114.8px;">default.trades publish (3.62ms)</span>
<span class="t" style="top:1587.00px;font-family:'Liberation Sans', sans-serif;font-size:28px;line-height:28px;color:#a8a8a8;-webkit-text-stroke:0.35px #a8a8a8;letter-spacing:-0.342px;left:175.3px;">default.trades process (13.74ms)</span>
<span class="t" style="top:1643.00px;font-family:'Liberation Sans', sans-serif;font-size:28px;line-height:28px;color:#a8a8a8;-webkit-text-stroke:0.35px #a8a8a8;letter-spacing:-0.285px;left:114.8px;">process trade (2.68ms)</span>
<span class="t" style="top:1699.00px;font-family:'Liberation Sans', sans-serif;font-size:28px;line-height:28px;color:#a8a8a8;-webkit-text-stroke:0.35px #a8a8a8;letter-spacing:-0.075px;left:114.8px;">default.notifications publish (4.28ms)</span>
<span class="t" style="top:1755.00px;font-family:'Liberation Sans', sans-serif;font-size:28px;line-height:28px;color:#a8a8a8;-webkit-text-stroke:0.35px #a8a8a8;letter-spacing:-0.088px;left:264px;">default.notifications process (54.08ms)</span>
<span class="t" style="top:1811.00px;font-family:'Liberation Sans', sans-serif;font-size:28px;line-height:28px;color:#a8a8a8;-webkit-text-stroke:0.35px #a8a8a8;letter-spacing:-0.134px;left:114.8px;">send notification (50.38ms)</span>
</body></html>
